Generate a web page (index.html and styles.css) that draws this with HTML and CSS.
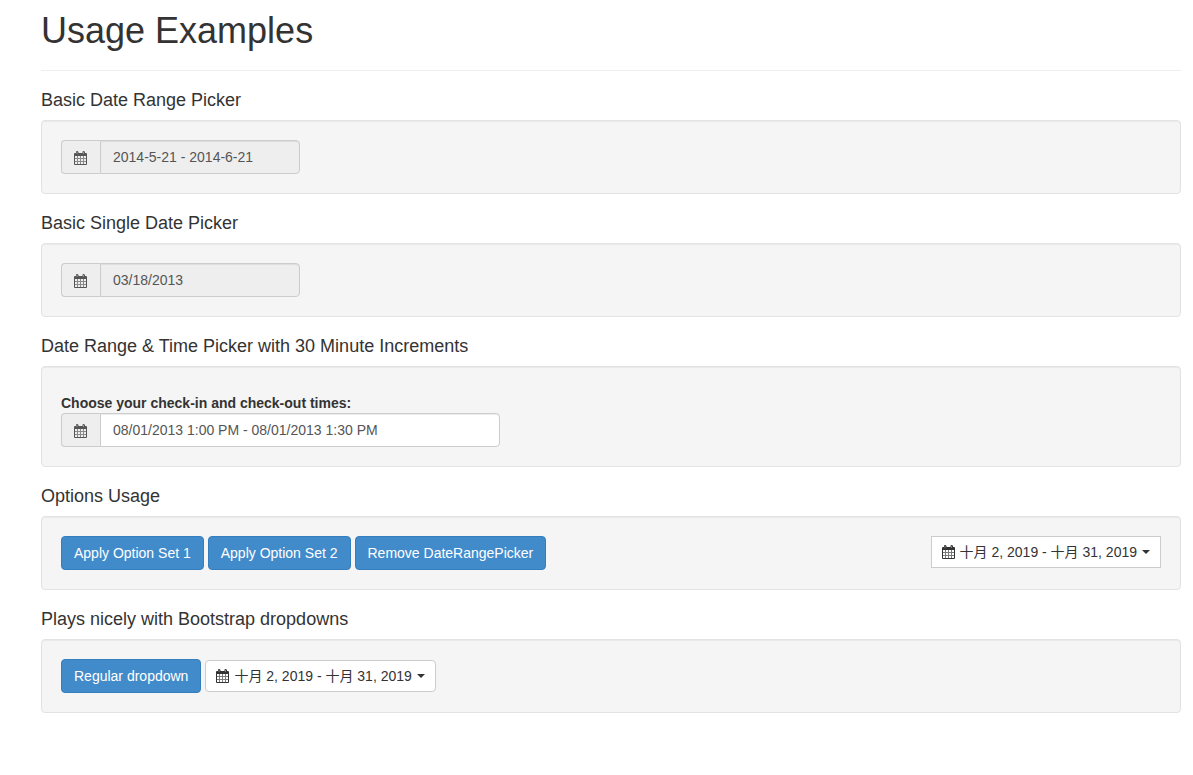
FILE: index.html
```html
<!DOCTYPE html>
<html lang="en">
<head>
  <meta charset="UTF-8" />
  <meta name="viewport" content="width=device-width, initial-scale=1.0"/>
  <title>Usage Examples</title>
  <link rel="stylesheet" href="styles.css">
</head>
<body>

  <svg class="sprite" aria-hidden="true">
    <symbol id="calendar" viewBox="0 0 13 14">
      <!-- header with the two rings -->
      <path d="M1 2h1V1q0-1 1-1t1.500 1v1h4V1q0-1 1-1T11 1v1h1q1 0 1 1v2H0V3q0-1 1-1z"/>
      <path d="M3 1v2M9.500 1v2" fill="none" stroke="#fff" stroke-width="1" opacity="0.35"/>
      <!-- outline and day grid -->
      <path d="M0 5h1v8h11V5h1v8q0 1-1 1H1q-1 0-1-1z"/>
      <path d="M3 5h1v8H3zM6 5h1v8H6zM9 5h1v8H9zM1 7h11v1H1zM1 10h11v1H1z" opacity="0.65"/>
    </symbol>
  </svg>

  <div class="container">
    <div class="page-header">
      <h1>Usage Examples</h1>
    </div>

    <h4 id="range-title">Basic Date Range Picker</h4>
    <div class="well">
      <div class="input-group">
        <span class="addon"><svg class="icon"><use href="#calendar"/></svg></span>
        <input type="text" class="form-control" id="reservation" aria-labelledby="range-title" value="2014-5-21 - 2014-6-21" readonly />
      </div>
    </div>

    <h4 id="single-title">Basic Single Date Picker</h4>
    <div class="well">
      <div class="input-group">
        <span class="addon"><svg class="icon"><use href="#calendar"/></svg></span>
        <input type="text" class="form-control" id="birthday" aria-labelledby="single-title" value="03/18/2013" readonly />
      </div>
    </div>

    <h4>Date Range &amp; Time Picker with 30 Minute Increments</h4>
    <div class="well">
      <label for="reservationtime">Choose your check-in and check-out times:</label>
      <div class="input-group wide">
        <span class="addon"><svg class="icon"><use href="#calendar"/></svg></span>
        <input type="text" class="form-control" id="reservationtime" value="08/01/2013 1:00 PM - 08/01/2013 1:30 PM" />
      </div>
    </div>

    <h4>Options Usage</h4>
    <div class="well toolbar">
      <button type="button" class="btn btn-primary">Apply Option Set 1</button>
      <button type="button" class="btn btn-primary">Apply Option Set 2</button>
      <button type="button" class="btn btn-primary">Remove DateRangePicker</button>
      <button type="button" class="range pull-right">
        <svg class="icon"><use href="#calendar"/></svg>
        <span>十月 2, 2019 - 十月 31, 2019</span>
        <b class="caret"></b>
      </button>
    </div>

    <h4>Plays nicely with Bootstrap dropdowns</h4>
    <div class="well toolbar centered">
      <button type="button" class="btn btn-primary">Regular dropdown</button>
      <button type="button" class="range rounded">
        <svg class="icon"><use href="#calendar"/></svg>
        <span>十月 2, 2019 - 十月 31, 2019</span>
        <b class="caret"></b>
      </button>
    </div>
  </div>

</body>
</html>
```
FILE: styles.css
```css
* {
  box-sizing: border-box;
}

body {
  margin: 0;
  font-family: "Liberation Sans", Arial, "Noto Sans CJK SC", sans-serif;
  font-size: 14px;
  line-height: 20px;
  color: #333;
  background-color: #fff;
}

.sprite {
  position: absolute;
  width: 0;
  height: 0;
}

.container {
  padding: 11px 12px 40px 41px;
}

.page-header {
  padding-bottom: 19px;
  margin-bottom: 20px;
  border-bottom: 1px solid #eee;
}

h1, h4 {
  margin: 0;
  font-weight: normal;
}

h1 {
  font-size: 36px;
  line-height: 40px;
}

h4 {
  font-size: 18px;
  line-height: 19px;
  margin-bottom: 10px;
}

.well {
  padding: 19px;
  margin-bottom: 20px;
  background-color: #f5f5f5;
  border: 1px solid #e3e3e3;
  border-radius: 4px;
  box-shadow: inset 0 1px 1px rgba(0, 0, 0, 0.05);
}

label {
  display: block;
  padding-top: 7px;
  font-weight: bold;
}

.icon {
  flex: none;
  width: 13px;
  height: 14px;
  fill: currentColor;
}

/* inputs */
.input-group {
  display: flex;
  max-width: 239px;
}

.input-group.wide {
  max-width: 439px;
}

.addon {
  display: flex;
  align-items: center;
  flex: none;
  width: 39px;
  padding-top: 2px;
  padding-left: 12px;
  color: #555;
  background-color: #eee;
  border: 1px solid #ccc;
  border-right: 0;
  border-radius: 4px 0 0 4px;
}

.form-control {
  flex: 1;
  min-width: 0;
  height: 34px;
  padding: 6px 12px;
  font: inherit;
  color: #555;
  background-color: #fff;
  border: 1px solid #ccc;
  border-radius: 0 4px 4px 0;
  box-shadow: inset 0 1px 1px rgba(0, 0, 0, 0.075);
}

.form-control[readonly] {
  background-color: #eee;
}

/* buttons */
.toolbar {
  display: flex;
  flex-wrap: wrap;
  align-items: flex-start;
  gap: 4px;
}

.toolbar.centered {
  align-items: center;
}

.btn {
  padding: 6px 12px;
  font: inherit;
  border: 1px solid transparent;
  border-radius: 4px;
  cursor: pointer;
}

.btn-primary {
  color: #fff;
  background-color: #428bca;
  border-color: #357ebd;
}

.range {
  display: flex;
  align-items: center;
  gap: 5px;
  height: 32px;
  padding: 5px 10px;
  font: inherit;
  color: #333;
  background-color: #fff;
  border: 1px solid #ccc;
  cursor: pointer;
}

.range.rounded {
  border-radius: 4px;
}

.pull-right {
  margin-left: auto;
}

.caret {
  border-top: 4px solid;
  border-left: 4px solid transparent;
  border-right: 4px solid transparent;
}
```
